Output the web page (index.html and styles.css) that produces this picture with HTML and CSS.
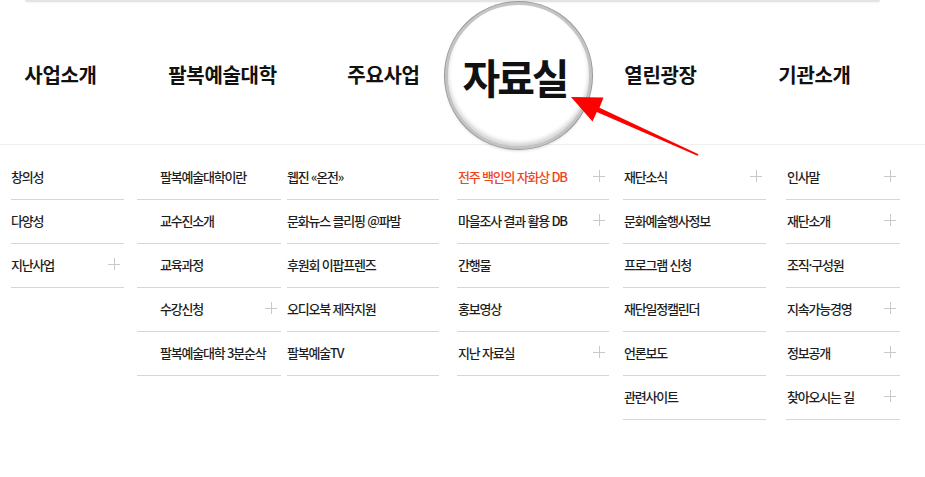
FILE: index.html
```html
<!DOCTYPE html>
<html lang="ko">
<head>
  <meta charset="UTF-8" />
  <meta name="viewport" content="width=device-width, initial-scale=1.0" />
  <title>전체메뉴</title>
  <link rel="stylesheet" href="styles.css">
</head>
<body>
  <div class="page">
    <div class="top-line"></div>

    <!-- 대메뉴 -->
    <ul class="gnb">
      <li>사업소개</li>
      <li>팔복예술대학</li>
      <li>주요사업</li>
      <li class="zoomed">
        <span class="gnb-text">자료실</span>
        <div class="lens"><span>자료실</span></div>
      </li>
      <li>열린광장</li>
      <li>기관소개</li>
    </ul>

    <!-- 서브메뉴 -->
    <div class="sub-wrap">
      <ul class="sub col1">
        <li>창의성</li>
        <li>다양성</li>
        <li class="more">지난사업</li>
      </ul>
      <ul class="sub col2">
        <li>팔복예술대학이란</li>
        <li>교수진소개</li>
        <li>교육과정</li>
        <li class="more">수강신청</li>
        <li>팔복예술대학 3분순삭</li>
      </ul>
      <ul class="sub col3">
        <li>웹진 «온전»</li>
        <li>문화뉴스 클리핑 @파발</li>
        <li>후원회 이팝프렌즈</li>
        <li>오디오북 제작지원</li>
        <li>팔복예술TV</li>
      </ul>
      <ul class="sub col4">
        <li class="more active">전주 백인의 자화상 DB</li>
        <li class="more">마을조사 결과 활용 DB</li>
        <li>간행물</li>
        <li>홍보영상</li>
        <li class="more">지난 자료실</li>
      </ul>
      <ul class="sub col5">
        <li class="more">재단소식</li>
        <li>문화예술행사정보</li>
        <li>프로그램 신청</li>
        <li>재단일정캘린더</li>
        <li>언론보도</li>
        <li>관련사이트</li>
      </ul>
      <ul class="sub col6">
        <li class="more">인사말</li>
        <li class="more">재단소개</li>
        <li>조직·구성원</li>
        <li class="more">지속가능경영</li>
        <li class="more">정보공개</li>
        <li class="more">찾아오시는 길</li>
      </ul>
    </div>

    <!-- 화살표 -->
    <svg class="arrow" width="925" height="477" viewBox="0 0 925 477">
      <polygon fill="#ff0000" points="571,97 603.5,97.5 599.5,107.8 698.5,154.2 697.5,155.8 596.8,112 592.5,121.5" />
    </svg>
  </div>
</body>
</html>
```

FILE: styles.css
```css
* {
  box-sizing: border-box;
}

body {
  margin: 0;
  background: #fff;
  font-family: "Noto Sans CJK KR", "Noto Sans", sans-serif;
  color: #222;
}

ul {
  list-style: none;
  margin: 0;
  padding: 0;
}

.page {
  position: relative;
  width: 925px;
  height: 477px;
  overflow: hidden;
}

.top-line {
  height: 2px;
  margin: 0 45px 0 25px;
  background: #e4e4e4;
  border-radius: 0 0 3px 3px;
  box-shadow: 0 1px 2px rgba(0, 0, 0, 0.05);
}

.gnb {
  display: grid;
  grid-template-columns: 121px 203px 119px 150px 135px 173px;
  height: 143px;
  border-bottom: 1px solid #efefef;
}

.gnb li {
  display: flex;
  justify-content: center;
  align-items: center;
  padding-top: 2px;
  font-size: 20px;
  font-weight: bold;
  letter-spacing: -0.3px;
  color: #111;
}

.gnb li.zoomed {
  position: relative;
}

.gnb-text {
  visibility: hidden;
}

.lens {
  position: absolute;
  left: 2px;
  top: 0;
  width: 147px;
  height: 147px;
  border-radius: 50%;
  background: #fff;
  border: 3px solid #c4c4c4;
  box-shadow: 0 0 0 1px #9a9a9a, inset 0 -3px 4px rgba(0, 0, 0, 0.18), 0 2px 3px rgba(0, 0, 0, 0.15);
  display: flex;
  justify-content: center;
  align-items: center;
  z-index: 2;
}

.lens span {
  font-size: 41px;
  font-weight: bold;
  letter-spacing: -3px;
  color: #111;
  margin-left: -8px;
  margin-top: 0;
}

.sub-wrap {
  display: flex;
  align-items: flex-start;
  padding: 11px 0 0 11px;
}

.sub li {
  position: relative;
  height: 44px;
  border-bottom: 1px solid #d6d6d6;
  display: flex;
  align-items: center;
  padding-left: 1px;
  padding-bottom: 3px;
  font-size: 13px;
  font-weight: 500;
  letter-spacing: -1.2px;
  color: #1e1e1e;
}

.sub li.active {
  color: #f0451f;
}

.sub li.more::before,
.sub li.more::after {
  content: "";
  position: absolute;
  background: #c9c9c9;
}

.sub li.more::before {
  right: 4px;
  top: 20px;
  width: 12px;
  height: 1px;
}

.sub li.more::after {
  right: 9.5px;
  top: 14px;
  width: 1px;
  height: 12px;
}

.col1 { width: 113px; }
.col1 li { padding-left: 0; }
.col2 { width: 144px; margin-left: 13px; }
.col2 li { padding-left: 23px; }
.col3 { width: 152px; margin-left: 6px; }
.col3 li { padding-left: 0; }
.col4 { width: 152px; margin-left: 18px; }
.col5 { width: 143px; margin-left: 14px; }
.col6 { width: 114px; margin-left: 20px; }

.arrow {
  position: absolute;
  left: 0;
  top: 0;
  z-index: 3;
  pointer-events: none;
}
```
